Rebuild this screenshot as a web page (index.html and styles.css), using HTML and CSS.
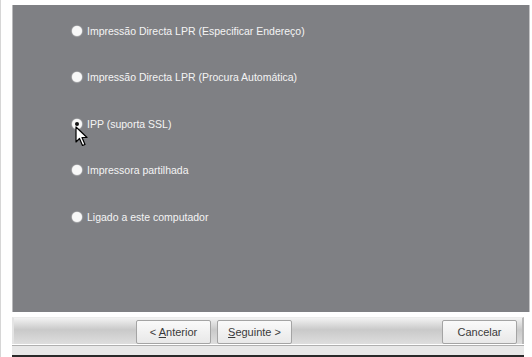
FILE: index.html
```html
<!DOCTYPE html>
<html lang="pt">
<head>
    <meta charset="UTF-8">
    <title>Tipo de ligação</title>
    <link rel="stylesheet" href="styles.css">
</head>
<body>

<div class="window">
    <div class="panel">
        <div class="options">
            <label class="option"><span class="radio"></span>Impressão Directa LPR (Especificar Endereço)</label>
            <label class="option"><span class="radio"></span>Impressão Directa LPR (Procura Automática)</label>
            <label class="option"><span class="radio checked"></span>IPP (suporta SSL)</label>
            <label class="option"><span class="radio"></span>Impressora partilhada</label>
            <label class="option"><span class="radio"></span>Ligado a este computador</label>
        </div>
        <svg class="cursor" width="14" height="22" viewBox="0 0 14 22">
            <path d="M1 1 L1 16 L4.5 12.5 L7.5 19.5 L10 18.5 L7 11.5 L12 11.5 Z" fill="#fff" stroke="#000" stroke-width="1.2" stroke-linejoin="round"/>
        </svg>
    </div>

    <div class="buttonbar">
        <button class="btn btn-back">&lt; <u>A</u>nterior</button>
        <button class="btn btn-next"><u>S</u>eguinte &gt;</button>
        <button class="btn btn-cancel">Cancelar</button>
    </div>
    <div class="bottom-line"></div>
</div>

</body>
</html>
```

FILE: styles.css
```css
body {
    margin: 0;
    background-color: #ffffff;
    font-family: "Liberation Sans", Arial, sans-serif;
    font-size: 11px;
    width: 532px;
    height: 357px;
    overflow: hidden;
}
.window {
    padding: 5px 2px 0 8px;
    height: 357px;
    border-left: 1px solid #d6d6d6;
    box-sizing: border-box;
    display: flex;
    flex-direction: column;
}
.panel {
    position: relative;
    flex-shrink: 0;
    margin-left: 3px;
    height: 307px;
    background-color: #7f8084;
    border-left: 1px solid #b9b9bb;
    border-right: 1px solid #c4c4c6;
    box-sizing: border-box;
}
.options {
    display: flex;
    flex-direction: column;
    gap: 33px;
    padding: 19px 0 0 59px;
}
.option {
    display: flex;
    align-items: center;
    gap: 5px;
    height: 13.5px;
    color: #f4f4f4;
    font-size: 10.5px;
}
.radio {
    width: 10px;
    height: 10px;
    border-radius: 50%;
    background-color: #f8f8f8;
    box-shadow: 0 0 1px 0.5px rgba(255, 255, 255, 0.6);
    position: relative;
}
.radio.checked::after {
    content: "";
    position: absolute;
    left: 3px;
    top: 3px;
    width: 4px;
    height: 4px;
    border-radius: 50%;
    background-color: #111;
}
.cursor {
    position: absolute;
    left: 62px;
    top: 121px;
}
.buttonbar {
    flex-shrink: 0;
    margin-top: 5px;
    margin-left: 3px;
    margin-right: 6px;
    height: 26px;
    display: flex;
    align-items: flex-end;
    padding: 0 0 0 122px;
    background: linear-gradient(#f2f2f2, #c9c9c9 45%, #dedede);
    border-left: 2px solid #e4e4e4;
    border-right: 2px solid #b8b8b8;
    border-top: 1px solid #ececec;
}
.btn {
    height: 24px;
    width: 75px;
    margin-right: 6px;
    border: 1px solid #a4a4a4;
    border-radius: 2px;
    background: linear-gradient(#fafafa, #e8e8e8);
    color: #3a3a3a;
    font-family: "Liberation Sans", Arial, sans-serif;
    font-size: 11px;
    padding: 0;
}
.btn-next {
    margin-right: 0;
}
.btn-cancel {
    margin-left: auto;
    margin-right: 5px;
}
.bottom-line {
    flex-grow: 1;
    margin-top: 1px;
    margin-left: 3px;
    margin-right: 6px;
    border-top: 1px solid #b0b0b0;
    border-bottom: 2px solid #2a2a2a;
    background-color: #e8e8e8;
}
```
